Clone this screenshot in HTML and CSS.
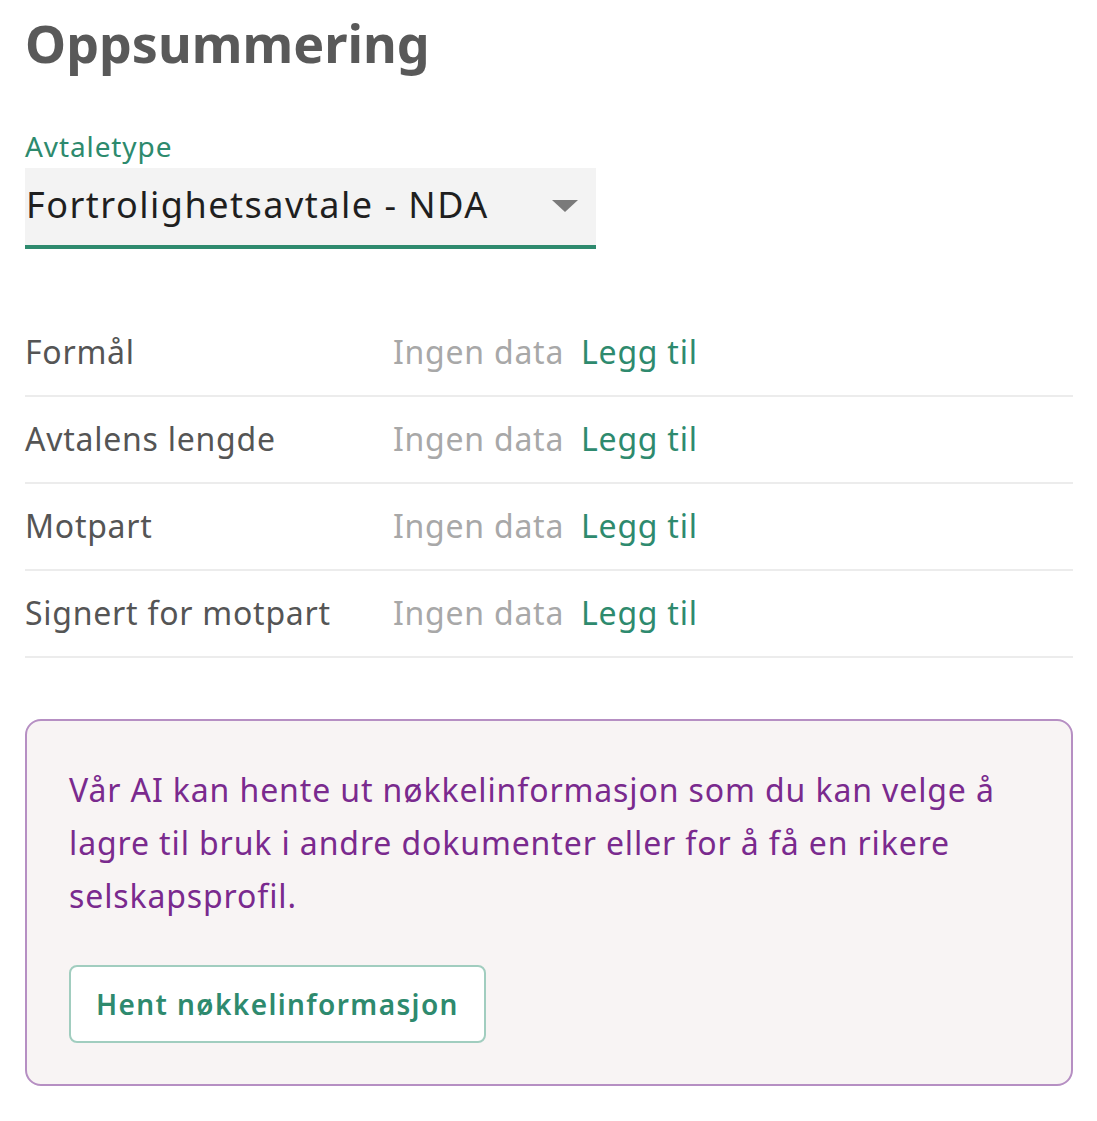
FILE: index.html
```html
<!DOCTYPE html>
<html lang="no">
<head>
<meta charset="utf-8">
<title>Oppsummering</title>
<link rel="stylesheet" href="styles.css">
</head>
<body>
<main class="page">
  <h1 class="title">Oppsummering</h1>

  <div class="field">
    <label class="field-label">Avtaletype</label>
    <div class="select">
      <span class="select-value">Fortrolighetsavtale - NDA</span>
      <svg class="select-arrow" width="26" height="14" viewBox="0 0 26 14"><path d="M0 1 L26 1 L13 13 Z" fill="#7a7a7a"/></svg>
    </div>
  </div>

  <dl class="summary">
    <div class="row"><dt>Formål</dt><dd><span class="empty">Ingen data</span><a class="add">Legg til</a></dd></div>
    <div class="row"><dt>Avtalens lengde</dt><dd><span class="empty">Ingen data</span><a class="add">Legg til</a></dd></div>
    <div class="row"><dt>Motpart</dt><dd><span class="empty">Ingen data</span><a class="add">Legg til</a></dd></div>
    <div class="row"><dt>Signert for motpart</dt><dd><span class="empty">Ingen data</span><a class="add">Legg til</a></dd></div>
  </dl>

  <section class="ai-box">
    <p class="ai-text">Vår AI kan hente ut nøkkelinformasjon som du kan velge å lagre til bruk i andre dokumenter eller for å få en rikere selskapsprofil.</p>
    <button class="ai-button">Hent nøkkelinformasjon</button>
  </section>
</main>
</body>
</html>
```

FILE: styles.css
```css
* { box-sizing: border-box; }
html, body { margin: 0; padding: 0; background: #ffffff; }
body { font-family: "Noto Sans", Roboto, sans-serif; }

.page {
  padding: 0 24px 0 25px;
  display: flex;
  flex-direction: column;
}

.title {
  margin: 0;
  padding-top: 7px;
  font-size: 52px;
  line-height: 72px;
  font-weight: 700;
  color: #595959;
}

.field {
  margin-top: 49px;
  display: flex;
  flex-direction: column;
  align-items: flex-start;
}
.field-label {
  font-size: 28px;
  line-height: 36px;
  letter-spacing: 0.9px;
  color: #2d8a6d;
}
.select {
  margin-top: 4px;
  width: 571px;
  height: 81px;
  background: #f3f3f3;
  border-bottom: 4px solid #2e8a6e;
  display: flex;
  align-items: center;
  justify-content: space-between;
  padding: 0 18px 0 1px;
}
.select-value {
  font-size: 36px;
  line-height: 48px;
  letter-spacing: 1.5px;
  color: #1f1f1f;
  padding-bottom: 4px;
}
.select-arrow { display: block; margin-bottom: 2px; }

.summary {
  margin: 61px 0 0;
  display: flex;
  flex-direction: column;
}
.row {
  display: grid;
  grid-template-columns: 368px 1fr;
  align-items: center;
  height: 87px;
  border-bottom: 2px solid #ececec;
  font-size: 32px;
  line-height: 44px;
  letter-spacing: 0.75px;
  padding-bottom: 2px;
}
.row dt { color: #555555; }
.row dd { margin: 0; display: flex; gap: 17px; }
.empty { color: #a8a8a8; }
.add { color: #2e8a6e; }

.ai-box {
  margin-top: 61px;
  border: 2px solid #b68fc3;
  border-radius: 16px;
  background: #f8f4f4;
  padding: 42px 42px 41px;
  display: flex;
  flex-direction: column;
  align-items: flex-start;
}
.ai-text {
  margin: 0;
  font-size: 32px;
  line-height: 53px;
  letter-spacing: 0.88px;
  color: #7a2a8e;
}
.ai-button {
  margin-top: 43px;
  height: 78px;
  padding: 0 25px;
  background: #ffffff;
  border: 2px solid #a1cdbf;
  border-radius: 8px;
  font-family: inherit;
  font-size: 28px;
  font-weight: 600;
  letter-spacing: 1.4px;
  color: #2e8a6e;
}
```
